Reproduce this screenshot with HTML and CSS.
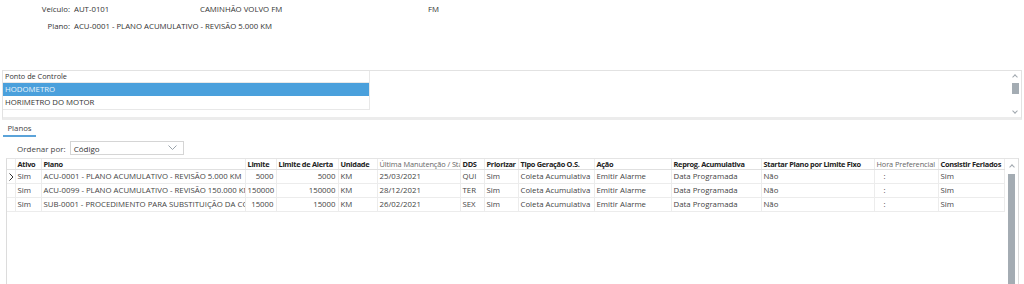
FILE: index.html
```html
<!DOCTYPE html>
<html lang="pt-BR">
<head>
  <meta charset="UTF-8">
  <title>Plano de Manutenção</title>
  <link rel="stylesheet" href="styles.css">
</head>
<body>
  <div class="info">
    <div class="info-row">
      <span class="info-label">Veículo:</span>
      <span class="info-code">AUT-0101</span>
      <span class="info-desc">CAMINHÃO VOLVO FM</span>
      <span>FM</span>
    </div>
    <div class="info-row">
      <span class="info-label">Plano:</span>
      <span>ACU-0001 - PLANO ACUMULATIVO - REVISÃO 5.000 KM</span>
    </div>
  </div>

  <div class="control-panel">
    <div class="control-list">
      <div class="control-head">Ponto de Controle</div>
      <div class="control-item selected">HODOMETRO</div>
      <div class="control-item">HORIMETRO DO MOTOR</div>
    </div>
    <div class="control-fill"></div>
    <div class="vscroll small">
      <span class="arrow up"></span>
      <span class="thumb"></span>
      <span class="arrow down"></span>
    </div>
  </div>

  <div class="tabs">
    <span class="tab active">Planos</span>
  </div>

  <div class="order-row">
    <span>Ordenar por:</span>
    <div class="combo">
      <span>Código</span>
      <svg width="9" height="6" viewBox="0 0 9 6"><path d="M0.5 0.5 L4.5 4.5 L8.5 0.5" fill="none" stroke="#9aa3ab" stroke-width="1"/></svg>
    </div>
  </div>

  <div class="grid-wrap">
    <table class="grid">
      <colgroup>
        <col style="width:8px"><col style="width:26px"><col style="width:204px"><col style="width:31px">
        <col style="width:62px"><col style="width:39px"><col style="width:83px"><col style="width:24px">
        <col style="width:34px"><col style="width:76px"><col style="width:77px"><col style="width:90px">
        <col style="width:113px"><col style="width:64px"><col style="width:66px">
      </colgroup>
      <thead>
        <tr>
          <th></th><th>Ativo</th><th>Plano</th><th>Limite</th><th>Limite de Alerta</th><th>Unidade</th>
          <th class="light">Última Manutenção / Start</th><th>DDS</th><th>Priorizar</th><th>Tipo Geração O.S.</th>
          <th>Ação</th><th>Reprog. Acumulativa</th><th>Startar Plano por Limite Fixo</th>
          <th class="light">Hora Preferencial</th><th>Consistir Feriados</th>
        </tr>
      </thead>
      <tbody>
        <tr>
          <td class="ind"><svg width="5" height="8" viewBox="0 0 5 8"><path d="M0.5 0.5 L4 4 L0.5 7.5" fill="none" stroke="#333" stroke-width="1"/></svg></td>
          <td>Sim</td><td>ACU-0001 - PLANO ACUMULATIVO - REVISÃO 5.000 KM</td><td class="num">5000</td><td class="num">5000</td>
          <td>KM</td><td>25/03/2021</td><td>QUI</td><td>Sim</td><td>Coleta Acumulativa</td><td>Emitir Alarme</td>
          <td>Data Programada</td><td>Não</td><td class="hour">:</td><td>Sim</td>
        </tr>
        <tr>
          <td class="ind"></td>
          <td>Sim</td><td>ACU-0099 - PLANO ACUMULATIVO - REVISÃO 150.000 KM</td><td class="num">150000</td><td class="num">150000</td>
          <td>KM</td><td>28/12/2021</td><td>TER</td><td>Sim</td><td>Coleta Acumulativa</td><td>Emitir Alarme</td>
          <td>Data Programada</td><td>Não</td><td class="hour">:</td><td>Sim</td>
        </tr>
        <tr>
          <td class="ind"></td>
          <td>Sim</td><td>SUB-0001 - PROCEDIMENTO PARA SUBSTITUIÇÃO DA CORREIA</td><td class="num">15000</td><td class="num">15000</td>
          <td>KM</td><td>26/02/2021</td><td>SEX</td><td>Sim</td><td>Coleta Acumulativa</td><td>Emitir Alarme</td>
          <td>Data Programada</td><td>Não</td><td class="hour">:</td><td>Sim</td>
        </tr>
      </tbody>
    </table>
    <div class="vscroll big">
      <span class="arrow up"></span>
      <span class="thumb"></span>
    </div>
  </div>
</body>
</html>
```

FILE: styles.css
```css
body {
  margin: 0;
  font-family: 'Open Sans', sans-serif;
  font-size: 7.8px;
  color: #333;
  background: #fff;
  height: 284px;
  overflow: hidden;
  display: flex;
  flex-direction: column;
}

.info {
  height: 70px;
  flex: none;
}

.info-row {
  display: flex;
  height: 17px;
  align-items: center;
}

.info-label {
  width: 70px;
  text-align: right;
  margin-right: 4px;
}

.info-code {
  width: 126px;
}

.info-desc {
  width: 228px;
}

.control-panel {
  margin: 0 2px;
  height: 50px;
  flex: none;
  border: 1px solid #e2e2e2;
  border-bottom: 3px solid #ececec;
  display: flex;
  box-sizing: border-box;
}

.control-list {
  width: 366px;
  height: 38px;
  border-right: 1px solid #e8e8e8;
  border-bottom: 1px solid #e8e8e8;
}

.control-head {
  height: 11px;
  line-height: 11px;
  padding-left: 2px;
  font-size: 7.3px;
  border-bottom: 1px solid #e8e8e8;
}

.control-item {
  height: 13px;
  line-height: 13px;
  padding-left: 2px;
}

.control-item.selected {
  background: #4aa0dc;
  color: #eaf4fb;
}

.control-fill {
  flex: 1;
}

.vscroll {
  width: 10px;
  display: flex;
  flex-direction: column;
  align-items: center;
}

.vscroll.small {
  margin-right: 1px;
}

.vscroll .arrow {
  width: 3px;
  height: 3px;
  border-left: 1px solid #a0a7ae;
  border-top: 1px solid #a0a7ae;
}

.vscroll .arrow.up {
  transform: rotate(45deg);
  margin-top: 4px;
}

.vscroll .arrow.down {
  transform: rotate(225deg);
  margin-top: 15px;
}

.vscroll.small .thumb {
  width: 7px;
  height: 11px;
  background: #a4acb3;
  margin-top: 4px;
}

.tabs {
  height: 16px;
  flex: none;
  display: flex;
  padding-left: 3px;
  margin-top: 1px;
}

.tab {
  width: 33px;
  text-align: center;
  line-height: 15px;
  color: #444;
}

.tab.active {
  border-bottom: 2px solid #5ba3d9;
}

.order-row {
  display: flex;
  flex: none;
  align-items: center;
  padding-left: 17px;
  height: 18px;
  margin-top: 2px;
  font-size: 8px;
  color: #444;
}

.combo {
  margin-left: 4px;
  width: 114px;
  height: 14px;
  border: 1px solid #d5d5d5;
  box-sizing: border-box;
  display: flex;
  align-items: center;
  justify-content: space-between;
  padding: 0 6px 0 3px;
  color: #333;
}

.grid-wrap {
  margin: 1px 5px 0 6px;
  flex: 1;
  border-left: 1px solid #dcdcdc;
  border-right: 1px solid #dcdcdc;
  border-top: 1px solid #e4e4e4;
  display: flex;
}

.grid {
  border-collapse: collapse;
  table-layout: fixed;
  width: 997px;
  align-self: flex-start;
}

.grid th,
.grid td {
  white-space: nowrap;
  overflow: hidden;
  text-overflow: clip;
  padding: 0 2px;
  text-align: left;
  border-right: 1px solid #ececec;
  border-bottom: 1px solid #ececec;
}

.grid th {
  height: 10px;
  line-height: 10px;
  font-size: 7.4px;
  letter-spacing: -0.3px;
  font-weight: bold;
  color: #222;
  border-bottom-color: #e0e0e0;
}

.grid th.light {
  font-weight: normal;
  letter-spacing: -0.1px;
  color: #666;
}

.grid td {
  height: 13px;
  line-height: 13px;
  color: #444;
}

.grid .ind {
  padding: 0 0 0 2px;
}

.grid .ind svg {
  display: block;
}

.grid .num {
  text-align: right;
}

.grid .hour {
  padding-left: 9px;
}

.vscroll.big {
  margin-left: 1px;
  width: 12px;
}

.vscroll.big .arrow.up {
  margin-top: 6px;
}

.vscroll.big .thumb {
  width: 7px;
  flex: 1;
  margin-top: 5px;
  background: #a4acb3;
}
```
